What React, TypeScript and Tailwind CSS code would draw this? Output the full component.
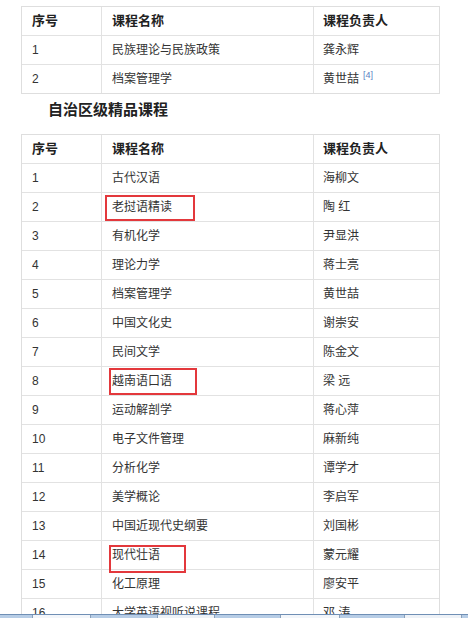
import React from "react";

type Row = { no: string; name: string; lead: React.ReactNode; mark?: string };

const national: Row[] = [
  { no: "1", name: "民族理论与民族政策", lead: "龚永辉" },
  {
    no: "2",
    name: "档案管理学",
    lead: (
      <>
        黄世喆
        <sup className="ml-[4px] text-[9px] text-[#5a7fc4] align-[5px]">[4]</sup>
      </>
    ),
  },
];

const regional: Row[] = [
  { no: "1", name: "古代汉语", lead: "海柳文" },
  { no: "2", name: "老挝语精读", lead: "陶 红", mark: "left-[3px] top-[2px] w-[90px] h-[26px]" },
  { no: "3", name: "有机化学", lead: "尹显洪" },
  { no: "4", name: "理论力学", lead: "蒋士亮" },
  { no: "5", name: "档案管理学", lead: "黄世喆" },
  { no: "6", name: "中国文化史", lead: "谢崇安" },
  { no: "7", name: "民间文学", lead: "陈金文" },
  { no: "8", name: "越南语口语", lead: "梁 远", mark: "left-[7px] top-[1px] w-[88px] h-[27px]" },
  { no: "9", name: "运动解剖学", lead: "蒋心萍" },
  { no: "10", name: "电子文件管理", lead: "麻新纯" },
  { no: "11", name: "分析化学", lead: "谭学才" },
  { no: "12", name: "美学概论", lead: "李启军" },
  { no: "13", name: "中国近现代史纲要", lead: "刘国彬" },
  { no: "14", name: "现代壮语", lead: "蒙元耀", mark: "left-[7px] top-[4px] w-[77px] h-[28px]" },
  { no: "15", name: "化工原理", lead: "廖安平" },
  { no: "16", name: "大学英语视听说课程", lead: "邓 涛" },
];

function CourseTable({ rows }: { rows: Row[] }) {
  return (
    <div className="ml-[21px] w-[419px] border border-[#dedede]">
      <div className="flex h-[29px] border-b border-[#e2e2e2] text-[13px] font-bold text-[#222]">
        <div className="flex w-[80px] items-center border-r border-[#e2e2e2] pl-[10px]">序号</div>
        <div className="flex w-[212px] items-center border-r border-[#e2e2e2] pl-[10px]">课程名称</div>
        <div className="flex w-[125px] items-center pl-[9px]">课程负责人</div>
      </div>
      {rows.map((r) => (
        <div
          key={r.no}
          className="flex h-[29px] border-b border-[#e2e2e2] text-[12px] text-[#333] last:h-[28px] last:border-b-0"
        >
          <div className="flex w-[80px] items-center border-r border-[#e2e2e2] pl-[10px]">{r.no}</div>
          <div className="relative flex w-[212px] items-center border-r border-[#e2e2e2] pl-[10px]">
            {r.name}
            {r.mark && (
              <span className={`pointer-events-none absolute border-2 border-[#e3383c] ${r.mark}`} />
            )}
          </div>
          <div className="flex w-[125px] items-center pl-[9px]">{r.lead}</div>
        </div>
      ))}
    </div>
  );
}

export default function App() {
  return (
    <div
      className="relative h-[618px] overflow-hidden bg-white pt-[6px]"
      style={{ fontFamily: "'Liberation Sans', Arial, 'Noto Sans CJK SC', sans-serif" }}
    >
      <CourseTable rows={national} />
      <h3 className="ml-[48px] mt-[4px] mb-[12px] h-[24px] text-[15px] font-bold leading-[24px] text-[#222]">
        自治区级精品课程
      </h3>
      <CourseTable rows={regional} />

      {/* window taskbar edge peeking in at the bottom */}
      <div className="absolute bottom-0 left-0 flex h-[4px] w-full border-t border-[#6f8fb5] bg-[#b7cde6]">
        <div className="w-[32px]" />
        <div className="w-[59px] border-x border-[#8aa0ba] bg-[#f3f6fa]" />
        <div className="w-[66px]" />
        <div className="w-[58px] border-x border-[#8aa0ba] bg-[#eef2f7]" />
        <div className="w-[65px]" />
        <div className="w-[60px] border-x border-[#8aa0ba] bg-[#f3f6fa]" />
        <div className="w-[64px]" />
        <div className="w-[58px] border-x border-[#8aa0ba] bg-[#eef2f7]" />
      </div>
    </div>
  );
}
